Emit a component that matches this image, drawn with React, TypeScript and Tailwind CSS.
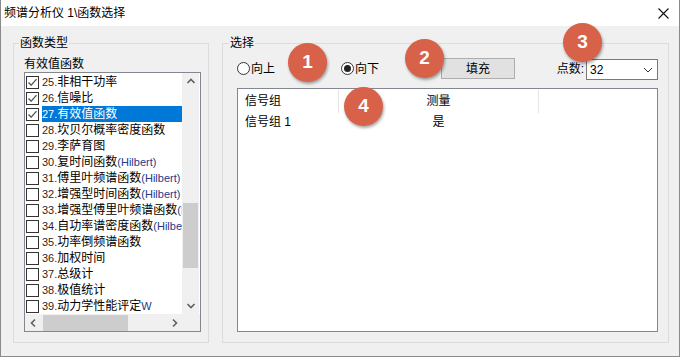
import React from "react";

type Item = { n: string; name: string; tail?: string; checked?: boolean; selected?: boolean };

const items: Item[] = [
  { n: "25.", name: "非相干功率", checked: true },
  { n: "26.", name: "信噪比", checked: true },
  { n: "27.", name: "有效值函数", checked: true, selected: true },
  { n: "28.", name: "坎贝尔概率密度函数" },
  { n: "29.", name: "李萨育图" },
  { n: "30.", name: "复时间函数", tail: "(Hilbert)" },
  { n: "31.", name: "傅里叶频谱函数", tail: "(Hilbert)" },
  { n: "32.", name: "增强型时间函数", tail: "(Hilbert)" },
  { n: "33.", name: "增强型傅里叶频谱函数", tail: "(Hilbert)" },
  { n: "34.", name: "自功率谱密度函数", tail: "(Hilbert)" },
  { n: "35.", name: "功率倒频谱函数" },
  { n: "36.", name: "加权时间" },
  { n: "37.", name: "总级计" },
  { n: "38.", name: "极值统计" },
  { n: "39.", name: "动力学性能评定", tail: "W" },
];

function Chevron({ dir }: { dir: "up" | "down" | "left" | "right" }) {
  const pts: Record<string, string> = {
    up: "1.5,6 5,2.5 8.5,6",
    down: "1.5,3 5,6.5 8.5,3",
    left: "6,1.5 2.5,5 6,8.5",
    right: "3,1.5 6.5,5 3,8.5",
  };
  return (
    <svg width="10" height="10" viewBox="0 0 10 10">
      <polyline points={pts[dir]} fill="none" stroke="#606060" strokeWidth="1.6" />
    </svg>
  );
}

function Checkbox({ checked }: { checked?: boolean }) {
  return (
    <span className="w-[13px] h-[13px] border border-[#333333] bg-white flex items-center justify-center shrink-0">
      {checked && (
        <svg width="11" height="11" viewBox="0 0 11 11">
          <polyline points="1.5,5.5 4.2,8.2 9.5,2.2" fill="none" stroke="#4a4a4a" strokeWidth="1.2" />
        </svg>
      )}
    </span>
  );
}

function Radio({ checked, label }: { checked?: boolean; label: string }) {
  return (
    <div className="flex items-center">
      <span className="w-[13px] h-[13px] rounded-full border border-[#333333] bg-white flex items-center justify-center">
        {checked && <span className="w-[7px] h-[7px] rounded-full bg-[#222222]" />}
      </span>
      <span className="ml-[1px] leading-[16px]">{label}</span>
    </div>
  );
}

function Badge({ n, cls }: { n: string; cls: string }) {
  return (
    <div
      className={`absolute w-[39px] h-[39px] rounded-full bg-[#d8614a] text-white flex items-center justify-center font-['Liberation_Sans',sans-serif] font-bold text-[19px] shadow-[1px_2px_3px_rgba(0,0,0,0.35)] ${cls}`}
    >
      {n}
    </div>
  );
}

export default function App() {
  return (
    <div className="relative w-[680px] h-[357px] overflow-hidden bg-[#f0f0f0] border-x border-b border-[#8a8a8a] flex flex-col text-[12px] text-black font-['Liberation_Sans','Noto_Sans_CJK_SC',sans-serif]">
      {/* title bar */}
      <div className="h-[26px] bg-white flex items-center justify-between pl-[3px] pr-[10px] shrink-0">
        <span className="leading-[16px] text-[12px]">频谱分析仪 1\函数选择</span>
        <svg width="11" height="11" viewBox="0 0 11 11">
          <path d="M0.5 0.5 L10.5 10.5 M10.5 0.5 L0.5 10.5" stroke="#111" strokeWidth="1.1" />
        </svg>
      </div>

      {/* body */}
      <div className="flex pl-[12px] pt-[17px]">
        {/* left group */}
        <div className="relative w-[196px] h-[300px] border border-[#dcdcdc] pl-[10px] pr-[7px] pt-[12px] flex flex-col">
          <span className="absolute left-[5px] top-[-9px] px-[1px] bg-[#f0f0f0] leading-[16px]">函数类型</span>
          <div className="leading-[16px] h-[16px]">有效值函数</div>
          <div className="w-[177px] h-[260px] border border-[#828790] bg-white flex flex-col">
            <div className="flex h-[241px]">
              <div className="w-[157px] overflow-hidden pt-[1px]">
                {items.map((it) => (
                  <div key={it.n} className="h-[16px] flex items-center pl-[1px] whitespace-nowrap">
                    <Checkbox checked={it.checked} />
                    <span
                      className={`ml-[3px] h-[16px] leading-[16px] flex-1 ${
                        it.selected ? "bg-[#0078d7] text-white" : ""
                      }`}
                    >
                      <span className={`text-[11px] ${it.selected ? "" : "text-[#3a1c14]"}`}>{it.n}</span>
                      {it.name}
                      {it.tail && (
                        <span className={`text-[11px] ${it.selected ? "" : "text-[#1d3a8c]"}`}>{it.tail}</span>
                      )}
                    </span>
                  </div>
                ))}
              </div>
              <div className="w-[17px] bg-[#f0f0f0] flex flex-col items-center">
                <div className="h-[17px] flex items-center justify-center">
                  <Chevron dir="up" />
                </div>
                <div className="h-[113px]" />
                <div className="w-[15px] h-[65px] bg-[#cdcdcd]" />
                <div className="flex-1" />
                <div className="h-[17px] flex items-center justify-center">
                  <Chevron dir="down" />
                </div>
              </div>
            </div>
            <div className="h-[17px] flex bg-[#f0f0f0]">
              <div className="w-[17px] flex items-center justify-center">
                <Chevron dir="left" />
              </div>
              <div className="ml-[1px] w-[85px] h-[16px] self-center bg-[#cdcdcd]" />
              <div className="flex-1" />
              <div className="w-[17px] flex items-center justify-center">
                <Chevron dir="right" />
              </div>
              <div className="w-[17px]" />
            </div>
          </div>
        </div>

        {/* right group */}
        <div className="relative ml-[13px] w-[447px] h-[300px] border border-[#dcdcdc] pl-[14px] pr-[10px] pt-[13px] pb-[10px] flex flex-col">
          <span className="absolute left-[6px] top-[-9px] px-[1px] bg-[#f0f0f0] leading-[16px]">选择</span>
          <div className="h-[23px] flex items-center">
            <div className="w-[104px]">
              <Radio label="向上" />
            </div>
            <div className="w-[100px]">
              <Radio checked label="向下" />
            </div>
            <div className="w-[74px] h-[21px] bg-[#e1e1e1] border border-[#adadad] flex items-center justify-center leading-[16px]">
              填充
            </div>
            <div className="flex-1" />
            <span className="leading-[16px] mr-[2px]">点数:</span>
            <div className="w-[72px] h-[21px] mt-[2px] bg-white border border-[#7a7a7a] flex items-center justify-between pl-[3px] pr-[4px]">
              <span className="leading-[16px]">32</span>
              <svg width="10" height="10" viewBox="0 0 10 10">
                <polyline points="1,3 5,7 9,3" fill="none" stroke="#333" strokeWidth="1" />
              </svg>
            </div>
          </div>
          <div className="mt-[8px] flex-1 border border-[#828790] bg-white flex flex-col">
            <div className="h-[24px] flex items-center">
              <div className="w-[100px] pl-[7px] leading-[16px]">信号组</div>
              <div className="w-px h-[23px] bg-[#e5e5e5]" />
              <div className="w-[199px] text-center leading-[16px]">测量</div>
              <div className="w-px h-[23px] bg-[#e5e5e5]" />
            </div>
            <div className="h-[18px] flex items-center">
              <div className="w-[100px] pl-[7px] leading-[16px]">信号组 1</div>
              <div className="w-px" />
              <div className="w-[199px] text-center leading-[16px]">是</div>
            </div>
          </div>
        </div>
      </div>

      <Badge n="1" cls="left-[287px] top-[43px]" />
      <Badge n="2" cls="left-[404px] top-[39px]" />
      <Badge n="3" cls="left-[562px] top-[23px]" />
      <Badge n="4" cls="left-[343px] top-[87px]" />
    </div>
  );
}
